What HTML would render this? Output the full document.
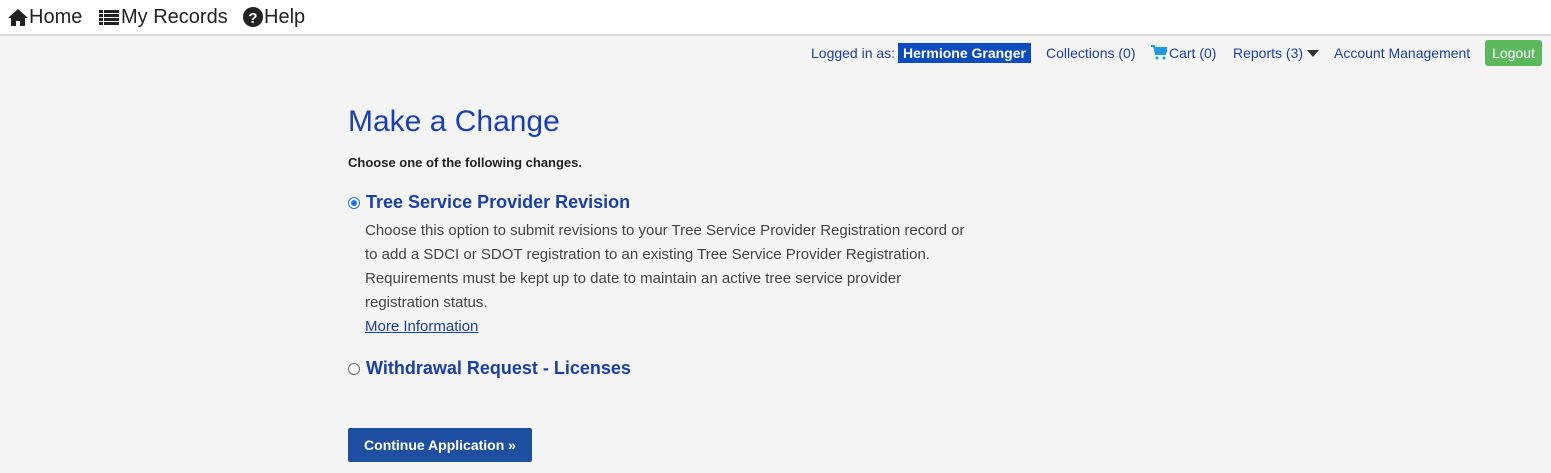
<!DOCTYPE html>
<html><head><style>
body{margin:0;width:1551px;height:473px;background:#f4f4f4;font-family:"Liberation Sans",sans-serif;overflow:hidden;position:relative}
.top{position:absolute;left:0;top:0;width:1551px;height:34px;background:#fff;border-bottom:2px solid #d8d8d8}
.top span{position:absolute;top:6px;font-size:20px;color:#222}
.a{position:absolute;font-size:14px;color:#1a3fa8;top:45px}
h1{position:absolute;left:348px;top:105px;margin:0;font-weight:normal;font-size:30px;color:#1a3fb0}
.t{position:absolute;color:#333}
.opt{position:absolute;left:366px;font-size:18px;font-weight:bold;color:#1a3fa8}
.radio{position:absolute;left:348px;width:10px;height:10px;border-radius:50%;border:1px solid #666;background:#fff}
</style></head><body>
<div class="top">
<svg style="position:absolute;left:8px;top:9px" width="20" height="17" viewBox="0 0 20 17"><path d="M10 0L0 9h3v8h5v-5h4v5h5V9h3z" fill="#222"/></svg>
<span style="left:29px">Home</span>
<svg style="position:absolute;left:99px;top:10px" width="20" height="15" viewBox="0 0 20 15"><path d="M0 0h4v3H0zM5 0h15v3H5zM0 4h4v3H0zM5 4h15v3H5zM0 8h4v3H0zM5 8h15v3H5zM0 12h4v3H0zM5 12h15v3H5z" fill="#222"/></svg>
<span style="left:121px">My Records</span>
<svg style="position:absolute;left:243px;top:7px" width="20" height="20" viewBox="0 0 20 20"><circle cx="10" cy="10" r="10" fill="#222"/><text x="10" y="16" text-anchor="middle" font-family="Liberation Sans" font-weight="bold" font-size="15" fill="#fff">?</text></svg>
<span style="left:264px">Help</span>
</div>
<div class="a" style="left:811px">Logged in as:</div>
<div style="position:absolute;left:898px;top:43px;width:133px;height:20px;background:#0a4bbd;color:#fff;font-weight:bold;font-size:14px;line-height:20px;text-align:center">Hermione Granger</div>
<div class="a" style="left:1046px">Collections (0)</div>
<svg style="position:absolute;left:1151px;top:45px" width="16" height="15" viewBox="0 0 16 15"><path d="M0 1h3l2 8h9l2-6H4" fill="none" stroke="#1e9be0" stroke-width="2"/><circle cx="6" cy="13" r="1.5" fill="#1e9be0"/><circle cx="13" cy="13" r="1.5" fill="#1e9be0"/><path d="M4 3h12l-2 6H5z" fill="#1e9be0"/></svg>
<div class="a" style="left:1169px">Cart (0)</div>
<div class="a" style="left:1233px">Reports (3)</div>
<svg style="position:absolute;left:1307px;top:50px" width="12" height="7"><path d="M0 0h12L6 7z" fill="#333"/></svg>
<div class="a" style="left:1334px">Account Management</div>
<div style="position:absolute;left:1485px;top:40px;width:57px;height:26px;background:#5cb85c;border-radius:3px;color:#fff;font-size:14px;line-height:26px;text-align:center">Logout</div>
<h1>Make a Change</h1>
<div class="t" style="left:348px;top:155px;font-size:13px;font-weight:bold;color:#222">Choose one of the following changes.</div>
<div class="radio" style="top:197px;border-color:#1a73e8"><div style="margin:2px;width:6px;height:6px;border-radius:50%;background:#1a73e8"></div></div>
<div class="opt" style="top:192px">Tree Service Provider Revision</div>
<div class="t" style="left:365px;top:219px;font-size:15px;line-height:24px;color:#444">Choose this option to submit revisions to your Tree Service Provider Registration record or<br>to add a SDCI or SDOT registration to an existing Tree Service Provider Registration.<br>Requirements must be kept up to date to maintain an active tree service provider<br>registration status.<br><span style="color:#1a3fa8;text-decoration:underline">More Information</span></div>
<div class="radio" style="top:363px"></div>
<div class="opt" style="top:358px">Withdrawal Request - Licenses</div>
<div style="position:absolute;left:348px;top:428px;width:184px;height:34px;background:#1e4fa0;border-radius:2px;color:#fff;font-weight:bold;font-size:14px;line-height:34px;text-align:center">Continue Application »</div>
</body></html>
